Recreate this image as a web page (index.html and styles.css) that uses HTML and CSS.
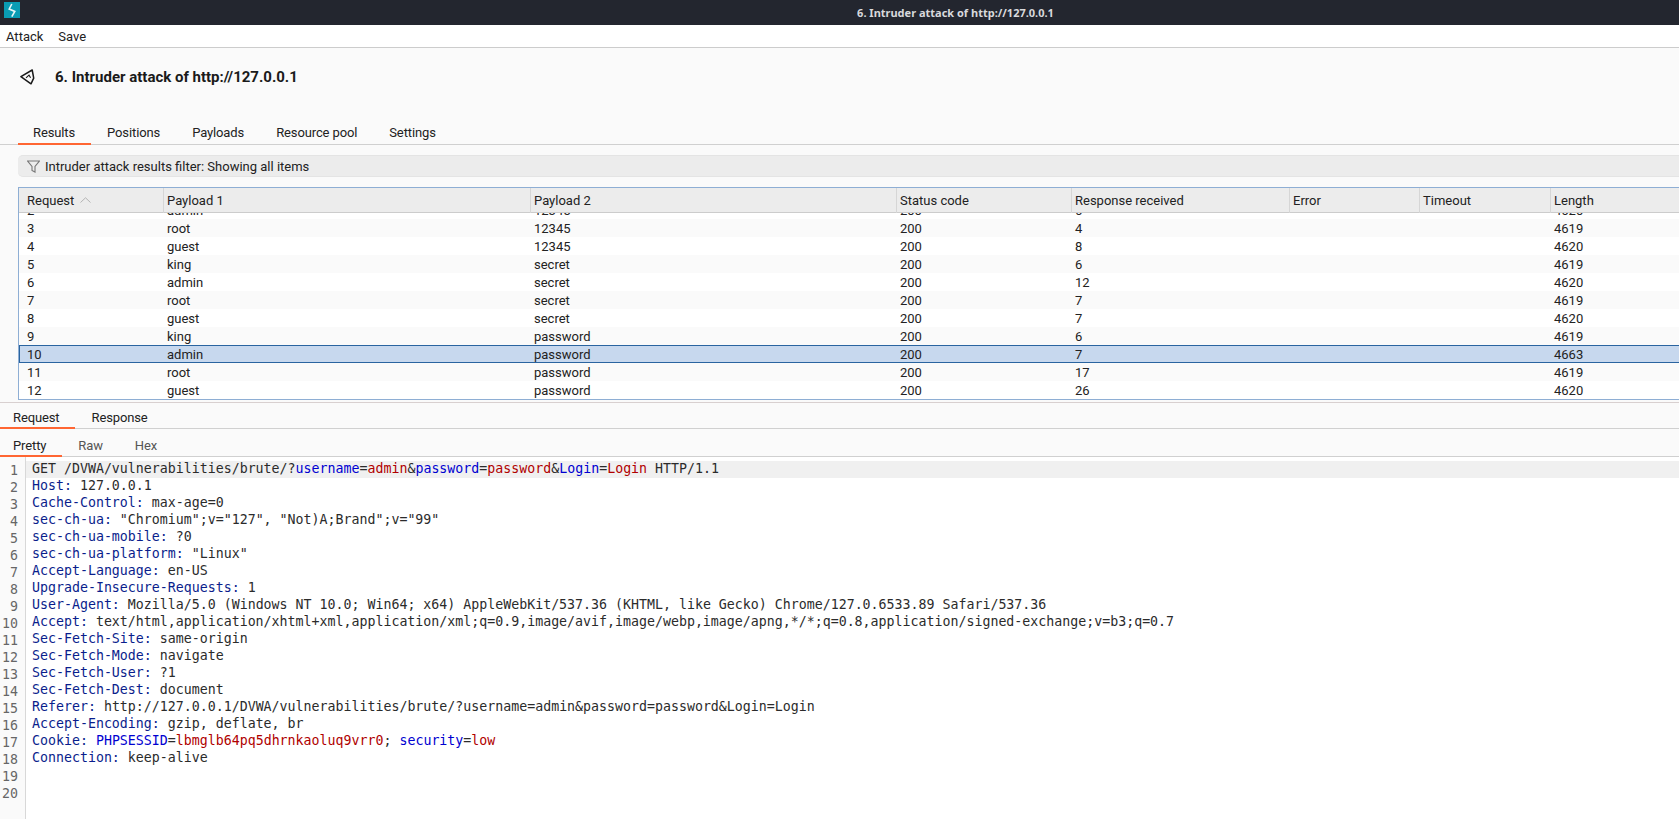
FILE: index.html
```html
<!DOCTYPE html>
<html lang="en">
<head>
<meta charset="utf-8">
<title>6. Intruder attack of http://127.0.0.1</title>
<link rel="stylesheet" href="styles.css">
</head>
<body>
<header class="titlebar">
  <svg class="applogo" width="16" height="16" viewBox="0 0 16 16"><rect width="16" height="16" fill="#0a9cb4"/><path d="M7.8 2 5.2 7l5.6 2.4L7.8 14.6" fill="none" stroke="#e8f6f8" stroke-width="1.6"/></svg>
  <span class="titlebar-text">6. Intruder attack of http://127.0.0.1</span>
</header>
<nav class="menubar"><span>Attack</span><span>Save</span></nav>
<section class="heading">
  <svg class="backicon" width="15" height="16" viewBox="0 0 15 16"><path d="M.9 7.6 12.2 1l1.5 8.2L11 14.8Z" fill="none" stroke="#1a1a1a" stroke-width="1.5" stroke-linejoin="round"/><path d="M6 8.8 9 6.2l1.6 2.6" fill="none" stroke="#1a1a1a" stroke-width="1.1"/></svg>
  <h1>6. Intruder attack of http://127.0.0.1</h1>
</section>
<div class="tabs main-tabs">
  <span class="tab active">Results</span><span class="tab">Positions</span><span class="tab">Payloads</span><span class="tab">Resource pool</span><span class="tab">Settings</span>
</div>
<div class="filter">
  <svg width="13" height="13" viewBox="0 0 13 13"><path d="M.6 1h11.8L8 6.5v5.6L5 10.4V6.5Z" fill="none" stroke="#777" stroke-width="1.1"/></svg>
  <span>Intruder attack results filter: Showing all items</span>
</div>
<div class="table">
  <div class="row head">
    <span>Request <svg class="sort" width="11" height="6" viewBox="0 0 11 6"><path d="M.5 5.5 5.5.8l5 4.7" fill="none" stroke="#b4b4b4"/></svg></span><span>Payload 1</span><span>Payload 2</span><span>Status code</span><span>Response received</span><span>Error</span><span>Timeout</span><span>Length</span>
  </div>
  <div class="body">
    <div class="rows">
      <div class="row"><span>2</span><span>admin</span><span>12345</span><span>200</span><span>6</span><span></span><span></span><span>4620</span></div>
      <div class="row"><span>3</span><span>root</span><span>12345</span><span>200</span><span>4</span><span></span><span></span><span>4619</span></div>
      <div class="row"><span>4</span><span>guest</span><span>12345</span><span>200</span><span>8</span><span></span><span></span><span>4620</span></div>
      <div class="row"><span>5</span><span>king</span><span>secret</span><span>200</span><span>6</span><span></span><span></span><span>4619</span></div>
      <div class="row"><span>6</span><span>admin</span><span>secret</span><span>200</span><span>12</span><span></span><span></span><span>4620</span></div>
      <div class="row"><span>7</span><span>root</span><span>secret</span><span>200</span><span>7</span><span></span><span></span><span>4619</span></div>
      <div class="row"><span>8</span><span>guest</span><span>secret</span><span>200</span><span>7</span><span></span><span></span><span>4620</span></div>
      <div class="row"><span>9</span><span>king</span><span>password</span><span>200</span><span>6</span><span></span><span></span><span>4619</span></div>
      <div class="row selected"><span>10</span><span>admin</span><span>password</span><span>200</span><span>7</span><span></span><span></span><span>4663</span></div>
      <div class="row"><span>11</span><span>root</span><span>password</span><span>200</span><span>17</span><span></span><span></span><span>4619</span></div>
      <div class="row"><span>12</span><span>guest</span><span>password</span><span>200</span><span>26</span><span></span><span></span><span>4620</span></div>
    </div>
  </div>
</div>
<div class="tabs sub-tabs first">
  <span class="tab active">Request</span><span class="tab">Response</span>
</div>
<div class="tabs sub-tabs second">
  <span class="tab active">Pretty</span><span class="tab muted">Raw</span><span class="tab muted">Hex</span>
</div>
<main class="editor">
  <ol class="gutter"><li>1</li><li>2</li><li>3</li><li>4</li><li>5</li><li>6</li><li>7</li><li>8</li><li>9</li><li>10</li><li>11</li><li>12</li><li>13</li><li>14</li><li>15</li><li>16</li><li>17</li><li>18</li><li>19</li><li>20</li></ol>
  <div class="code">
    <div class="line current">GET /DVWA/vulnerabilities/brute/?<b>username</b>=<i>admin</i>&amp;<b>password</b>=<i>password</i>&amp;<b>Login</b>=<i>Login</i> HTTP/1.1</div>
    <div class="line"><u>Host:</u> 127.0.0.1</div>
    <div class="line"><u>Cache-Control:</u> max-age=0</div>
    <div class="line"><u>sec-ch-ua:</u> "Chromium";v="127", "Not)A;Brand";v="99"</div>
    <div class="line"><u>sec-ch-ua-mobile:</u> ?0</div>
    <div class="line"><u>sec-ch-ua-platform:</u> "Linux"</div>
    <div class="line"><u>Accept-Language:</u> en-US</div>
    <div class="line"><u>Upgrade-Insecure-Requests:</u> 1</div>
    <div class="line"><u>User-Agent:</u> Mozilla/5.0 (Windows NT 10.0; Win64; x64) AppleWebKit/537.36 (KHTML, like Gecko) Chrome/127.0.6533.89 Safari/537.36</div>
    <div class="line"><u>Accept:</u> text/html,application/xhtml+xml,application/xml;q=0.9,image/avif,image/webp,image/apng,*/*;q=0.8,application/signed-exchange;v=b3;q=0.7</div>
    <div class="line"><u>Sec-Fetch-Site:</u> same-origin</div>
    <div class="line"><u>Sec-Fetch-Mode:</u> navigate</div>
    <div class="line"><u>Sec-Fetch-User:</u> ?1</div>
    <div class="line"><u>Sec-Fetch-Dest:</u> document</div>
    <div class="line"><u>Referer:</u> http://127.0.0.1/DVWA/vulnerabilities/brute/?username=admin&amp;password=password&amp;Login=Login</div>
    <div class="line"><u>Accept-Encoding:</u> gzip, deflate, br</div>
    <div class="line"><u>Cookie:</u> <b>PHPSESSID</b>=<i>lbmglb64pq5dhrnkaoluq9vrr0</i>; <b>security</b>=<i>low</i></div>
    <div class="line"><u>Connection:</u> keep-alive</div>
    <div class="line">&nbsp;</div>
    <div class="line">&nbsp;</div>
  </div>
</main>
</body>
</html>
```
FILE: styles.css
```css
* { box-sizing: border-box; }
html, body { margin: 0; height: 819px; overflow: hidden; }
body { background: #fafafa; font: 13px/18px Roboto, sans-serif; color: #222; display: flex; flex-direction: column; }

.titlebar { height: 25px; background: #23262f; display: flex; align-items: center; justify-content: center; padding-left: 232px; position: relative; flex: none; }
.applogo { position: absolute; left: 4px; top: 2px; }
.titlebar-text { color: #d8d9dc; font: 700 11px "Noto Sans", sans-serif; }

.menubar { height: 23px; background: #fff; border-bottom: 1px solid #ccc; display: flex; gap: 15px; padding: 2px 6px 0; align-items: center; flex: none; }

.heading { height: 60px; display: flex; align-items: center; gap: 20px; padding: 0 0 2px 20px; flex: none; }
.heading h1 { margin: 0; font-size: 15px; font-weight: 700; line-height: 20px; color: #1a1a1a; }
.backicon { flex: none; }

.tabs { display: flex; flex: none; border-bottom: 1px solid #d0d0d0; }
.tab { display: block; line-height: 20px; letter-spacing: -0.12px; }
.tab.active { border-bottom: 2px solid #ff6633; margin-bottom: -1px; }
.main-tabs { height: 37px; padding: 12px 0 0 18px; }
.main-tabs .tab { padding: 3px 16px 0; }
.main-tabs .tab:first-child { padding-left: 15px; }
.sub-tabs .tab { padding: 0 16px; }
.sub-tabs .tab:first-child { padding-left: 13px; }
.sub-tabs.first { height: 27px; padding-top: 2px; margin-top: 2px; border-top: 1px solid #d8d0d0; }
.sub-tabs.first .tab { padding-top: 3px; }
.sub-tabs.second { height: 28px; padding-top: 7px; }
.muted { color: #555; }

.filter { height: 22px; margin: 10px 0 0 18px; border-radius: 5px 0 0 5px; background: #ececec; border: solid #e4e4e4; border-width: 1px 0; display: flex; align-items: center; gap: 5px; padding-left: 9px; line-height: 20px; flex: none; }
.filter span { padding-top: 1px; }

.table { margin: 10px 0 0 18px; height: 213px; border: 1px solid #8eaed4; border-right: 0; flex: none; display: flex; flex-direction: column; overflow: hidden; }
.row { display: grid; grid-template-columns: 145px 367px 366px 175px 218px 130px 131px 1fr; height: 18px; }
.row > span { padding-left: 3px; white-space: nowrap; line-height: 20px; }
.row > span:first-child { padding-left: 8px; }
.head { height: 25px; background: #ececec; border-bottom: 1px solid #ccc; flex: none; position: relative; z-index: 1; }
.head > span { border-right: 1px solid #d6d6d6; line-height: 25px; }
.head > span:last-child { border-right: 0; }
.sort { vertical-align: 2px; margin-left: 2px; }
.body { flex: 1; overflow: hidden; background: #fff; }
.rows { margin-top: -12px; }
.rows .row:nth-child(even) { background: #fafafa; }
.rows .row.selected { background: #c7d8ee; box-shadow: inset 1px 0 0 #2a64a0, inset 0 1px 0 #2a64a0, inset 0 -1px 0 #2a64a0; }

.editor { flex: 1; display: flex; background: #fff; font: 13.28px/17px "DejaVu Sans Mono", monospace; min-height: 0; }
.gutter { list-style: none; margin: 0; padding: 3px 7px 0 0; width: 26px; border-right: 1px solid #d8d8d8; background: #fafafa; color: #666; flex: none; text-align: right; }
.gutter li { height: 17px; line-height: 21px; }
.code { flex: 1; padding-top: 4px; color: #2b2b2b; }
.line { height: 17px; padding-left: 6px; white-space: pre; line-height: 16px; }
.line.current { background: #f0f0f0; }
.line u { text-decoration: none; color: #0a1e8c; }
.line b { font-weight: 400; color: #0000d0; }
.line i { font-style: normal; color: #b00000; }
```
